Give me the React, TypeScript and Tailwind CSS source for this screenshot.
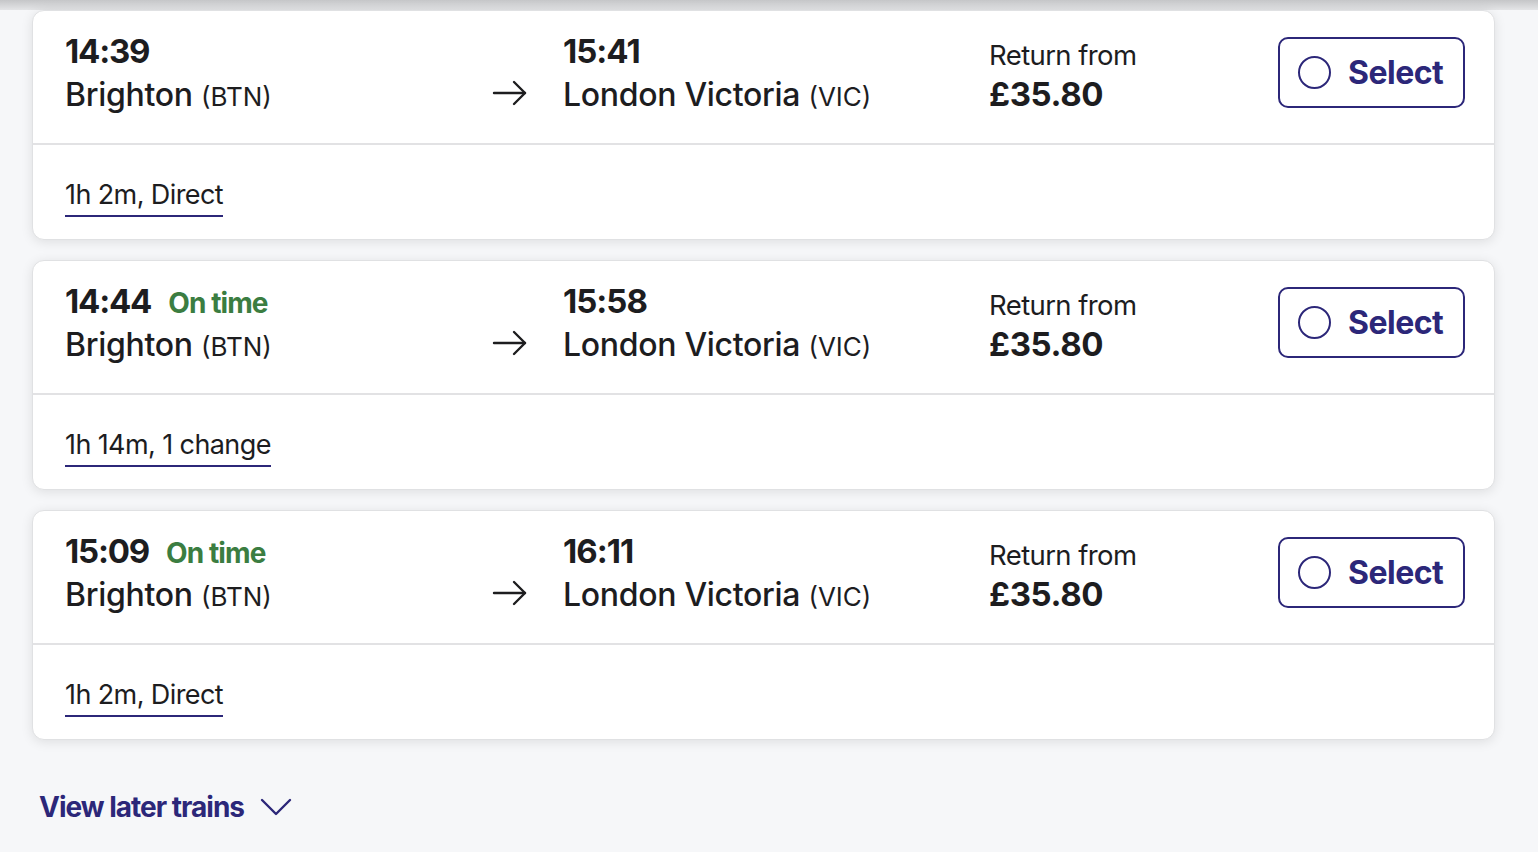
import React from 'react';

interface Journey {
  id: number;
  depart: string;
  arrive: string;
  status?: string;
  duration: string;
  price: string;
}

const journeys: Journey[] = [
  { id: 1, depart: '14:39', arrive: '15:41', duration: '1h 2m, Direct', price: '£35.80' },
  { id: 2, depart: '14:44', arrive: '15:58', status: 'On time', duration: '1h 14m, 1 change', price: '£35.80' },
  { id: 3, depart: '15:09', arrive: '16:11', status: 'On time', duration: '1h 2m, Direct', price: '£35.80' },
];

const ArrowRight = () => (
  <svg width="36" height="26" viewBox="0 0 36 26" fill="none" stroke="#1d1d1f" strokeWidth="2.4" strokeLinecap="round" strokeLinejoin="round">
    <path d="M2 13h31" />
    <path d="M22 2l11 11-11 11" />
  </svg>
);

const JourneyCard: React.FC<{ j: Journey }> = ({ j }) => (
  <div className="rounded-xl bg-white border border-[#e0e1e3] shadow-[0_2px_12px_rgba(0,0,0,0.1)] overflow-hidden">
    <div className="grid grid-cols-[429px_69px_426px_1fr_auto] pl-8 pr-[29px] pt-[20px] pb-[26px]">
      <div>
        <div className="flex items-baseline gap-[17px] h-10 leading-10">
          <span className="text-[33px] font-bold tracking-[-1.2px]">{j.depart}</span>
          {j.status && <span className="text-[28px] font-bold text-[#3b7d41] tracking-[-0.9px]">{j.status}</span>}
        </div>
        <div className="mt-[2px] h-11 leading-[44px] text-[32px] font-medium tracking-[-0.3px]">
          Brighton <span className="text-[26px] font-normal tracking-normal">(BTN)</span>
        </div>
      </div>
      <div className="flex items-center pt-[38px] -ml-[2px]">
        <ArrowRight />
      </div>
      <div>
        <div className="h-10 leading-10 text-[33px] font-bold tracking-[-1px]">{j.arrive}</div>
        <div className="mt-[2px] h-11 leading-[44px] text-[32px] font-medium tracking-[-0.3px]">
          London Victoria <span className="text-[26px] font-normal tracking-normal">(VIC)</span>
        </div>
      </div>
      <div className="pt-[5px]">
        <div className="text-[27.5px] leading-[38px] tracking-[-0.6px]">Return from</div>
        <div className="text-[33px] leading-10 font-bold tracking-[-0.4px]">{j.price}</div>
      </div>
      <div className="pt-[6px]">
        <button className="flex items-center w-[187px] h-[71px] rounded-[10px] border-2 border-[#2c2779] pl-[18px] gap-[17px] text-[#2c2779]">
          <span className="w-[33px] h-[33px] rounded-full border-2 border-[#2c2779] shrink-0" />
          <span className="text-[32px] font-bold tracking-[-0.5px]">Select</span>
        </button>
      </div>
    </div>
    <div className="h-[2px] bg-[#e2e2e4]" />
    <div className="pl-8 pt-[33px] pb-[22px]">
      <span className="inline-block text-[27px] leading-[34px] tracking-[-0.6px] border-b-2 border-[#2c2779] pb-[3px]">
        {j.duration}
      </span>
    </div>
  </div>
);

export default function App() {
  return (
    <div className="min-h-screen bg-[#f6f7f9] text-[#1d1d1f] font-['Inter','Liberation_Sans',sans-serif]">
      <div className="h-[10px] bg-gradient-to-b from-[#c5c6c8] to-[#e4e5e7]" />
      <div className="flex flex-col gap-5 pl-8 pr-[43px]">
        {journeys.map((j) => (
          <JourneyCard key={j.id} j={j} />
        ))}
      </div>
      <div className="flex items-center gap-4 pl-[39px] pt-[46px] text-[#2c2779]">
        <span className="text-[28px] font-bold tracking-[-1px]">View later trains</span>
        <svg width="32" height="20" viewBox="0 0 32 20" fill="none" stroke="#2c2779" strokeWidth="2.4" strokeLinecap="round" strokeLinejoin="round">
          <path d="M2 3l14 14 14-14" />
        </svg>
      </div>
    </div>
  );
}
